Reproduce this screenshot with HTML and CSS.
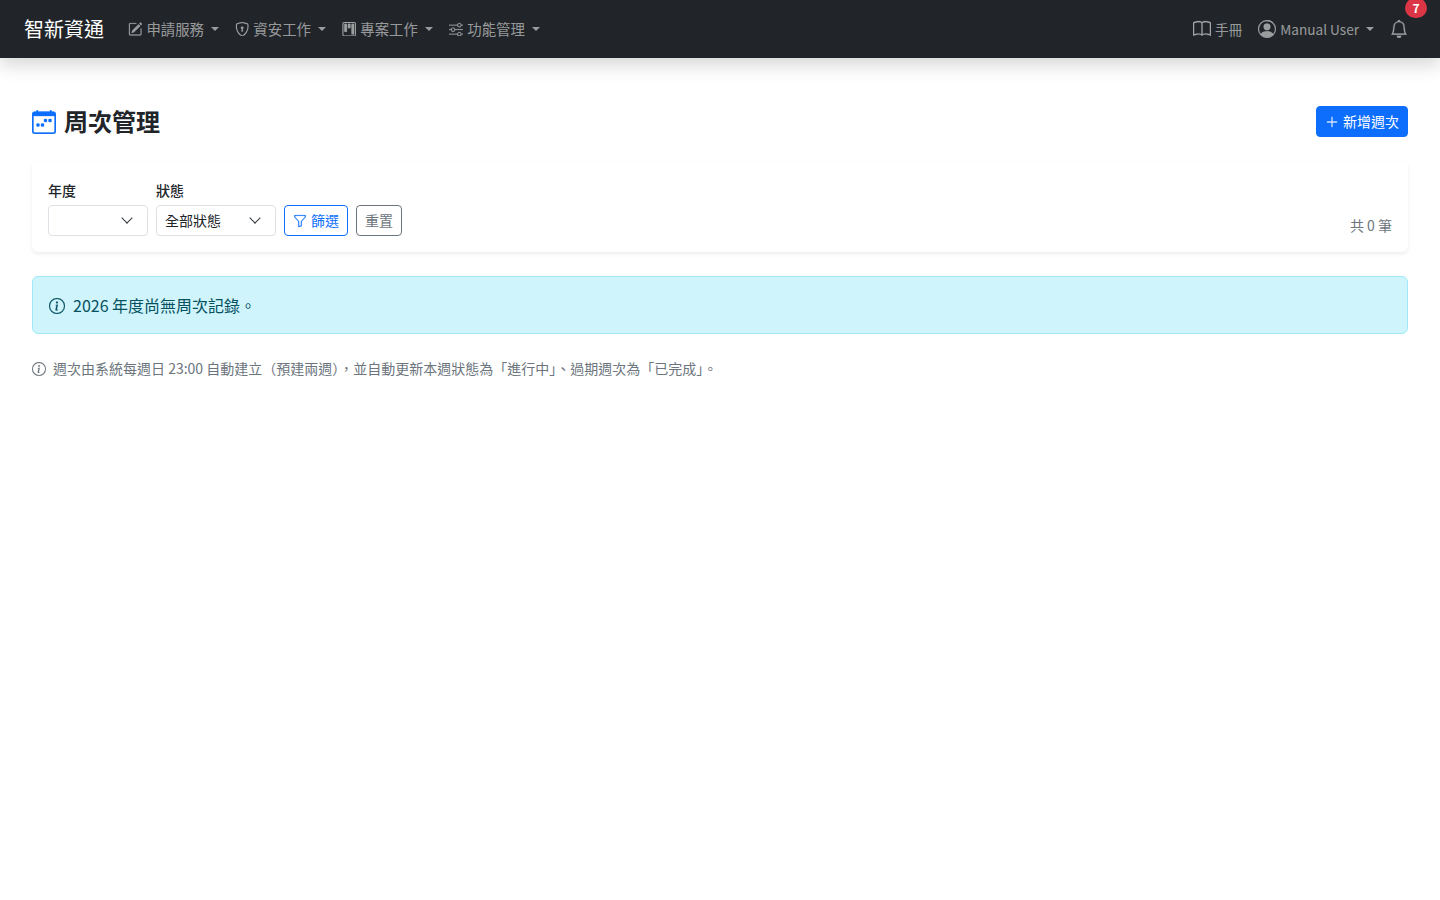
FILE: index.html
```html
<!DOCTYPE html>
<html lang="zh-TW">
<head>
    <meta charset="UTF-8">
    <meta name="viewport" content="width=device-width, initial-scale=1.0">
    <title>周次管理</title>
    <link rel="stylesheet" href="styles.css">
</head>
<body>
    <nav class="navbar">
        <a class="brand">智新資通</a>
        <ul class="nav-list">
            <li class="nav-link">
                <svg class="icon" viewBox="0 0 16 16"><path d="M15.502 1.94a.5.5 0 0 1 0 .706L14.459 3.69l-2-2L13.502.646a.5.5 0 0 1 .707 0l1.293 1.293zm-1.75 2.456-2-2L4.939 9.21a.5.5 0 0 0-.121.196l-.805 2.414a.25.25 0 0 0 .316.316l2.414-.805a.5.5 0 0 0 .196-.12l6.813-6.814z"/><path fill-rule="evenodd" d="M1 13.5A1.5 1.5 0 0 0 2.5 15h11a1.5 1.5 0 0 0 1.5-1.5v-6a.5.5 0 0 0-1 0v6a.5.5 0 0 1-.5.5h-11a.5.5 0 0 1-.5-.5v-11a.5.5 0 0 1 .5-.5H9a.5.5 0 0 0 0-1H2.5A1.5 1.5 0 0 0 1 2.5v11z"/></svg>
                <span>申請服務</span><i class="caret"></i>
            </li>
            <li class="nav-link">
                <svg class="icon" viewBox="0 0 16 16"><path d="M5.338 1.59a61 61 0 0 0-2.837.856.48.48 0 0 0-.328.39c-.554 4.157.726 7.19 2.253 9.188a10.7 10.7 0 0 0 2.287 2.233c.346.244.652.42.893.533q.18.085.293.118a1 1 0 0 0 .101.025 1 1 0 0 0 .1-.025q.114-.034.294-.118c.24-.113.547-.29.893-.533a10.7 10.7 0 0 0 2.287-2.233c1.527-1.997 2.807-5.031 2.253-9.188a.48.48 0 0 0-.328-.39c-.651-.213-1.75-.56-2.837-.855C9.552 1.29 8.531 1.067 8 1.067c-.53 0-1.552.223-2.662.524zM5.072.56C6.157.265 7.31 0 8 0s1.843.265 2.928.56c1.11.3 2.229.655 2.887.87a1.54 1.54 0 0 1 1.044 1.262c.596 4.477-.787 7.795-2.465 9.99a11.8 11.8 0 0 1-2.517 2.453 7 7 0 0 1-1.048.625c-.28.132-.581.24-.829.24s-.548-.108-.829-.24a7 7 0 0 1-1.048-.625 11.8 11.8 0 0 1-2.517-2.453C1.928 10.487.545 7.169 1.141 2.692A1.54 1.54 0 0 1 2.185 1.43 63 63 0 0 1 5.072.56"/><path d="M9.5 6.5a1.5 1.5 0 0 1-1 1.415l.385 1.99a.5.5 0 0 1-.491.595h-.788a.5.5 0 0 1-.49-.595l.384-1.99a1.5 1.5 0 1 1 2-1.415"/></svg>
                <span>資安工作</span><i class="caret"></i>
            </li>
            <li class="nav-link">
                <svg class="icon" viewBox="0 0 16 16"><path d="M13.5 1a1 1 0 0 1 1 1v12a1 1 0 0 1-1 1h-11a1 1 0 0 1-1-1V2a1 1 0 0 1 1-1zm-11-1a2 2 0 0 0-2 2v12a2 2 0 0 0 2 2h11a2 2 0 0 0 2-2V2a2 2 0 0 0-2-2z"/><path d="M6.5 3a1 1 0 0 1 1-1h1a1 1 0 0 1 1 1v3a1 1 0 0 1-1 1h-1a1 1 0 0 1-1-1zm-4 0a1 1 0 0 1 1-1h1a1 1 0 0 1 1 1v7a1 1 0 0 1-1 1h-1a1 1 0 0 1-1-1zm8 0a1 1 0 0 1 1-1h1a1 1 0 0 1 1 1v10a1 1 0 0 1-1 1h-1a1 1 0 0 1-1-1z"/></svg>
                <span>專案工作</span><i class="caret"></i>
            </li>
            <li class="nav-link">
                <svg class="icon" viewBox="0 0 16 16"><path fill-rule="evenodd" d="M11.5 2a1.5 1.5 0 1 0 0 3 1.5 1.5 0 0 0 0-3M9.05 3a2.5 2.5 0 0 1 4.9 0H16v1h-2.05a2.5 2.5 0 0 1-4.9 0H0V3zM4.5 7a1.5 1.5 0 1 0 0 3 1.5 1.5 0 0 0 0-3M2.05 8a2.5 2.5 0 0 1 4.9 0H16v1H6.95a2.5 2.5 0 0 1-4.9 0H0V8zm9.45 4a1.5 1.5 0 1 0 0 3 1.5 1.5 0 0 0 0-3m-2.45 1a2.5 2.5 0 0 1 4.9 0H16v1h-2.05a2.5 2.5 0 0 1-4.9 0H0v-1z"/></svg>
                <span>功能管理</span><i class="caret"></i>
            </li>
        </ul>
        <ul class="nav-list nav-right">
            <li class="nav-link">
                <svg class="icon icon-lg" viewBox="0 0 16 16"><path d="M1 2.828c.885-.37 2.154-.769 3.388-.893 1.33-.134 2.458.063 3.112.752v9.746c-.935-.53-2.12-.603-3.213-.493-1.18.12-2.37.461-3.287.811zm7.5-.141c.654-.689 1.782-.886 3.112-.752 1.234.124 2.503.523 3.388.893v9.923c-.918-.35-2.107-.692-3.287-.81-1.094-.111-2.278-.039-3.213.492zM8 1.783C7.015.936 5.587.81 4.287.94c-1.514.153-3.042.672-3.994 1.105A.5.5 0 0 0 0 2.5v11a.5.5 0 0 0 .707.455c.882-.4 2.303-.881 3.68-1.02 1.409-.142 2.59.087 3.223.877a.5.5 0 0 0 .78 0c.633-.79 1.814-1.019 3.222-.877 1.378.139 2.8.62 3.681 1.02A.5.5 0 0 0 16 13.5v-11a.5.5 0 0 0-.293-.455c-.952-.433-2.48-.952-3.994-1.105C10.413.809 8.985.936 8 1.783"/></svg>
                <span>手冊</span>
            </li>
            <li class="nav-link">
                <svg class="icon icon-lg" viewBox="0 0 16 16"><path d="M11 6a3 3 0 1 1-6 0 3 3 0 0 1 6 0"/><path fill-rule="evenodd" d="M0 8a8 8 0 1 1 16 0A8 8 0 0 1 0 8m8-7a7 7 0 0 0-5.468 11.37C3.242 11.226 4.805 10 8 10s4.757 1.225 5.468 2.37A7 7 0 0 0 8 1"/></svg>
                <span>Manual User</span><i class="caret"></i>
            </li>
            <li class="nav-link bell">
                <svg class="icon icon-lg" viewBox="0 0 16 16"><path d="M8 16a2 2 0 0 0 2-2H6a2 2 0 0 0 2 2M8 1.918l-.797.161A4 4 0 0 0 4 6c0 .628-.134 2.197-.459 3.742-.16.767-.376 1.566-.663 2.258h10.244c-.287-.692-.502-1.49-.663-2.258C12.134 8.197 12 6.628 12 6a4 4 0 0 0-3.203-3.92zM14.22 12c.223.447.481.801.78 1H1c.299-.199.557-.553.78-1C2.68 10.2 3 6.88 3 6c0-2.42 1.72-4.44 4.005-4.901a1 1 0 1 1 1.99 0A5 5 0 0 1 13 6c0 .88.32 4.2 1.22 6"/></svg>
                <span class="badge">7</span>
            </li>
        </ul>
    </nav>

    <main class="page">
        <div class="page-head">
            <h1 class="page-title">
                <svg class="title-icon" viewBox="0 0 16 16"><path d="M11 6.5a.5.5 0 0 1 .5-.5h1a.5.5 0 0 1 .5.5v1a.5.5 0 0 1-.5.5h-1a.5.5 0 0 1-.5-.5zm-3 0a.5.5 0 0 1 .5-.5h1a.5.5 0 0 1 .5.5v1a.5.5 0 0 1-.5.5h-1a.5.5 0 0 1-.5-.5zm-5 3a.5.5 0 0 1 .5-.5h1a.5.5 0 0 1 .5.5v1a.5.5 0 0 1-.5.5h-1a.5.5 0 0 1-.5-.5zm3 0a.5.5 0 0 1 .5-.5h1a.5.5 0 0 1 .5.5v1a.5.5 0 0 1-.5.5h-1a.5.5 0 0 1-.5-.5z"/><path d="M3.5 0a.5.5 0 0 1 .5.5V1h8V.5a.5.5 0 0 1 1 0V1h1a2 2 0 0 1 2 2v11a2 2 0 0 1-2 2H2a2 2 0 0 1-2-2V3a2 2 0 0 1 2-2h1V.5a.5.5 0 0 1 .5-.5M1 4v10a1 1 0 0 0 1 1h12a1 1 0 0 0 1-1V4z"/></svg>
                周次管理
            </h1>
            <button class="btn btn-primary">
                <svg class="icon" viewBox="0 0 16 16"><path fill-rule="evenodd" d="M8 2a.5.5 0 0 1 .5.5v5h5a.5.5 0 0 1 0 1h-5v5a.5.5 0 0 1-1 0v-5h-5a.5.5 0 0 1 0-1h5v-5A.5.5 0 0 1 8 2"/></svg>
                <span>新增週次</span>
            </button>
        </div>

        <section class="filter-card">
            <div class="field">
                <label class="field-label">年度</label>
                <div class="select select-year"></div>
            </div>
            <div class="field">
                <label class="field-label">狀態</label>
                <div class="select select-status">全部狀態</div>
            </div>
            <button class="btn btn-outline-primary">
                <svg class="icon" viewBox="0 0 16 16"><path d="M1.5 1.5A.5.5 0 0 1 2 1h12a.5.5 0 0 1 .5.5v2a.5.5 0 0 1-.128.334L10 8.692V13.5a.5.5 0 0 1-.342.474l-3 1A.5.5 0 0 1 6 14.5V8.692L1.628 3.834A.5.5 0 0 1 1.5 3.5zm1 .5v1.308l4.372 4.858A.5.5 0 0 1 7 8.5v5.306l2-.666V8.5a.5.5 0 0 1 .128-.334L13.5 3.308V2z"/></svg>
                <span>篩選</span>
            </button>
            <button class="btn btn-outline-secondary"><span>重置</span></button>
            <span class="count">共 0 筆</span>
        </section>

        <div class="alert">
            <svg class="icon icon-alert" viewBox="0 0 16 16"><path d="M8 15A7 7 0 1 1 8 1a7 7 0 0 1 0 14m0 1A8 8 0 1 0 8 0a8 8 0 0 0 0 16"/><path d="m8.93 6.588-2.29.287-.082.38.45.083c.294.07.352.176.288.469l-.738 3.468c-.194.897.105 1.319.808 1.319.545 0 1.178-.252 1.465-.598l.088-.416c-.2.176-.492.246-.686.246-.275 0-.375-.193-.304-.533zM9 4.5a1 1 0 1 1-2 0 1 1 0 0 1 2 0"/></svg>
            <span>2026 年度尚無周次記錄。</span>
        </div>

        <p class="note">
            <svg class="icon" viewBox="0 0 16 16"><path d="M8 15A7 7 0 1 1 8 1a7 7 0 0 1 0 14m0 1A8 8 0 1 0 8 0a8 8 0 0 0 0 16"/><path d="m8.93 6.588-2.29.287-.082.38.45.083c.294.07.352.176.288.469l-.738 3.468c-.194.897.105 1.319.808 1.319.545 0 1.178-.252 1.465-.598l.088-.416c-.2.176-.492.246-.686.246-.275 0-.375-.193-.304-.533zM9 4.5a1 1 0 1 1-2 0 1 1 0 0 1 2 0"/></svg>
            <span>週次由系統每週日 23:00 自動建立（預建兩週），並自動更新本週狀態為「進行中」、過期週次為「已完成」。</span>
        </p>
    </main>
</body>
</html>
```

FILE: styles.css
```css
* {
    box-sizing: border-box;
}
body {
    font-family: "Noto Sans CJK TC", "Noto Sans", sans-serif;
    margin: 0;
    background-color: #fff;
    color: #212529;
    font-size: 16px;
    line-height: 1.5;
}
.icon {
    width: 14px;
    height: 14px;
    fill: currentColor;
    stroke: currentColor;
    stroke-width: 0.2px;
    flex-shrink: 0;
}
.icon-lg {
    width: 18px;
    height: 18px;
}

/* navbar */
.navbar {
    display: flex;
    align-items: center;
    height: 58px;
    padding: 0 24px;
    background-color: #212529;
    box-shadow: 0 8px 16px rgba(0, 0, 0, 0.15);
}
.brand {
    color: #fff;
    font-size: 20px;
    margin-right: 16px;
}
.nav-list {
    display: flex;
    align-items: center;
    list-style: none;
    margin: 0;
    padding: 0;
}
.nav-right {
    margin-left: auto;
}
.nav-right .nav-link {
    font-size: 13.6px;
}
.nav-link {
    display: flex;
    align-items: center;
    gap: 4px;
    padding: 8px;
    color: rgba(255, 255, 255, 0.55);
    font-size: 14.4px;
}
.nav-link .icon:not(.icon-lg) {
    width: 14.4px;
    height: 14.4px;
}
.caret {
    width: 0;
    height: 0;
    margin-left: 3px;
    border-top: 4px solid currentColor;
    border-left: 4px solid transparent;
    border-right: 4px solid transparent;
}
.bell {
    position: relative;
}
.badge {
    position: absolute;
    top: -14px;
    left: 23px;
    min-width: 22px;
    padding: 4px 7px;
    border-radius: 10px;
    background-color: #dc3545;
    color: #fff;
    font-size: 12px;
    font-weight: 700;
    line-height: 12px;
    text-align: center;
}

/* page */
.page {
    padding: 48px 32px 0;
}
.page-head {
    display: flex;
    justify-content: space-between;
    align-items: center;
    margin-bottom: 24px;
}
.page-title {
    display: flex;
    align-items: center;
    gap: 8px;
    margin: 0;
    font-size: 24px;
    font-weight: 700;
    line-height: 1.2;
}
.title-icon {
    width: 24px;
    height: 24px;
    fill: #0d6efd;
    stroke: #0d6efd;
    stroke-width: 0.2px;
    margin-top: 1px;
}

/* buttons */
.btn {
    display: inline-flex;
    align-items: center;
    gap: 4px;
    height: 31px;
    padding: 0 8px;
    border: 1px solid transparent;
    border-radius: 4px;
    background: none;
    font-family: inherit;
    font-size: 14px;
    line-height: 21px;
    cursor: pointer;
}
.btn span {
    margin-top: -1px;
}
.btn-primary {
    background-color: #0d6efd;
    border-color: #0d6efd;
    color: #fff;
}
.btn-outline-primary {
    border-color: #0d6efd;
    color: #0d6efd;
}
.btn-outline-secondary {
    border-color: #6c757d;
    color: #6c757d;
}

/* filter */
.filter-card {
    display: flex;
    align-items: flex-end;
    gap: 8px;
    padding: 16px;
    margin-bottom: 24px;
    border-radius: 6px;
    background-color: #fff;
    box-shadow: 0 2px 4px rgba(0, 0, 0, 0.075);
}
.field-label {
    display: block;
    font-size: 14px;
    font-weight: 500;
    line-height: 26px;
    margin-bottom: 2px;
}
.select {
    position: relative;
    height: 31px;
    padding: 0 8px;
    border: 1px solid #dee2e6;
    border-radius: 4px;
    font-size: 14px;
    line-height: 29px;
}
.select::after {
    content: "";
    position: absolute;
    right: 16px;
    top: 8px;
    width: 7px;
    height: 7px;
    border-right: 1.6px solid #343a40;
    border-bottom: 1.6px solid #343a40;
    transform: rotate(45deg);
}
.select-year {
    width: 100px;
}
.select-status {
    width: 120px;
}
.count {
    margin-left: auto;
    color: #6c757d;
    font-size: 14px;
}

/* alert */
.alert {
    display: flex;
    align-items: center;
    gap: 8px;
    height: 58px;
    padding: 0 16px;
    margin-bottom: 24px;
    border: 1px solid #9eeaf9;
    border-radius: 6px;
    background-color: #cff4fc;
    color: #055160;
}
.icon-alert {
    width: 16px;
    height: 16px;
    margin-top: 2px;
}
.note {
    display: flex;
    align-items: center;
    gap: 7px;
    margin: 0;
    color: #6c757d;
    font-size: 14px;
}
```
